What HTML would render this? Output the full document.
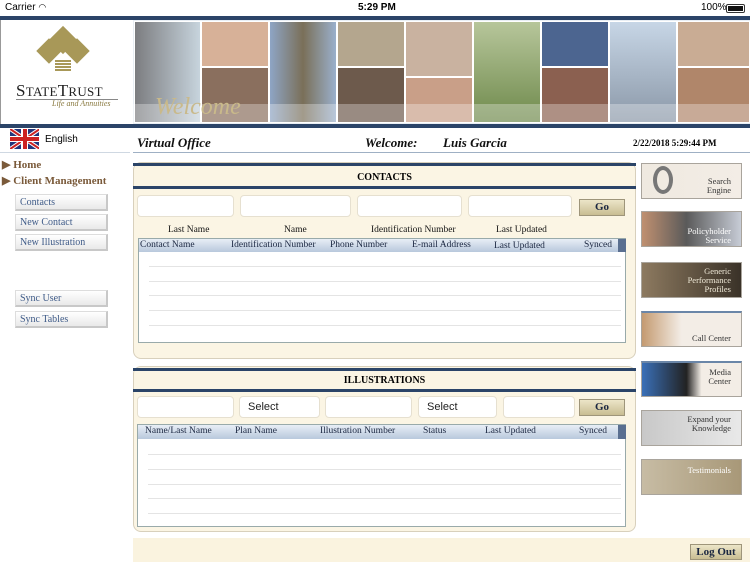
<!DOCTYPE html>
<html><head><style>
*{margin:0;padding:0;box-sizing:border-box}
body{width:750px;height:562px;position:relative;background:#fff;font-family:"Liberation Serif",serif;overflow:hidden}
.a{position:absolute}
.sans{font-family:"Liberation Sans",sans-serif}
.navy{background:#2b4468}
.ph{position:absolute;border:1px solid #fff}
.panel{position:absolute;background:#fbf5e4;border:1px solid #d8d0bc;border-radius:8px}
.inp{position:absolute;background:#fff;border:1px solid #e6e0d0;border-radius:4px;height:22px;font:11px "Liberation Sans",sans-serif;padding:4px 0 0 8px;color:#222}
.go{position:absolute;background:linear-gradient(#ece5c8,#c8bd92);border:1px solid #9e957a;font:bold 11px "Liberation Serif",serif;text-align:center;line-height:15px;color:#1a2640}
.hdr{position:absolute;height:13px;background:linear-gradient(#e8eef6,#b8c8dc);font-size:9.5px;color:#1a2640;border-right:8px solid #5a6f90}
.hdr span{position:absolute;top:1px}
.grid{position:absolute;background:#fff;border:1px solid #9aa}
.gl{position:absolute;left:10px;right:4px;height:1px;background:#e4e4e4}
.col{position:absolute;font-size:9.5px;color:#111}
.nav{position:absolute;left:15px;width:93px;height:17px;background:linear-gradient(#fff,#e9e9e9);border:1px solid #ddd;border-right:2px solid #c8c8c8;border-bottom:2px solid #c8c8c8;font-size:10px;color:#3f5b88;padding:2px 0 0 4px}
.tile{position:absolute;left:641px;width:101px;height:36px;border:1px solid #a9a49c;font-size:8.5px;color:#333;text-align:right;padding-right:10px;line-height:9px}
</style></head><body>
<!-- status -->
<div class="a sans" style="left:5px;top:2px;font-size:10px">Carrier ︎<span style="font-size:9px">◠</span></div>
<div class="a sans" style="left:358px;top:2px;font-size:10px;font-weight:bold">5:29 PM</div>
<div class="a sans" style="left:701px;top:2px;font-size:10px">100%</div>
<div class="a" style="left:726px;top:4px;width:19px;height:9px;border:1px solid #333;border-radius:2px;padding:1px"><div style="background:#111;width:100%;height:100%"></div></div>
<div class="a navy" style="left:0;top:16px;width:750px;height:4px"></div>
<!-- logo -->
<div class="a" style="left:0;top:20px;width:133px;height:105px;border-left:1px solid #999"></div>
<div class="a" style="left:53px;top:30px;width:20px;height:20px;background:#a89858;transform:rotate(45deg)"></div>
<div class="a" style="left:40px;top:42px;width:18px;height:18px;background:#a89858;transform:rotate(45deg)"></div>
<div class="a" style="left:68px;top:42px;width:18px;height:18px;background:#a89858;transform:rotate(45deg)"></div>
<div class="a" style="left:55px;top:60px;width:16px;height:12px;background:repeating-linear-gradient(#a89858 0 2px,#fff 2px 3px)"></div>
<div class="a" style="left:16px;top:81px;font-size:17px;color:#222;letter-spacing:.3px">S<span style="font-size:13px">TATE</span>T<span style="font-size:13px">RUST</span></div>
<div class="a" style="left:16px;top:99px;width:102px;border-top:1px solid #888"></div>
<div class="a" style="left:52px;top:99px;font-size:8px;font-style:italic;color:#8a7a40">Life and Annuities</div>
<!-- photos -->
<div class="a" style="left:133px;top:20px;width:617px;height:105px;background:#e8eef4"></div>
<div class="ph" style="left:134px;top:21px;width:67px;height:102px;background:linear-gradient(90deg,#7c7d80,#c7d4dd)"></div>
<div class="ph" style="left:201px;top:21px;width:68px;height:46px;background:#d7b198"></div>
<div class="ph" style="left:201px;top:67px;width:68px;height:56px;background:#8a6f5e"></div>
<div class="ph" style="left:269px;top:21px;width:68px;height:102px;background:linear-gradient(90deg,#8ea5c5,#7a6f58,#9ab0cc)"></div>
<div class="ph" style="left:337px;top:21px;width:68px;height:46px;background:#b4a68e"></div>
<div class="ph" style="left:337px;top:67px;width:68px;height:56px;background:#6d5a4c"></div>
<div class="ph" style="left:405px;top:21px;width:68px;height:56px;background:#c9b2a0"></div>
<div class="ph" style="left:405px;top:77px;width:68px;height:46px;background:#c99f88"></div>
<div class="ph" style="left:473px;top:21px;width:68px;height:102px;background:linear-gradient(#b7c69b,#6f8a4c)"></div>
<div class="ph" style="left:541px;top:21px;width:68px;height:46px;background:#4c6590"></div>
<div class="ph" style="left:541px;top:67px;width:68px;height:56px;background:#8b6050"></div>
<div class="ph" style="left:609px;top:21px;width:68px;height:102px;background:linear-gradient(#c7d6e6,#8b98a8)"></div>
<div class="ph" style="left:677px;top:21px;width:73px;height:46px;background:#c9ac94"></div>
<div class="ph" style="left:677px;top:67px;width:73px;height:56px;background:#b0866a"></div>
<div class="a" style="left:133px;top:104px;width:617px;height:19px;background:rgba(255,255,255,.3)"></div>
<div class="a" style="left:155px;top:94px;font-size:24px;font-style:italic;color:#c9b98a">Welcome</div>
<div class="a navy" style="left:0;top:124px;width:750px;height:4px"></div>
<!-- flag row -->
<div class="a" style="left:10px;top:129px;width:29px;height:20px;background:#22357a;overflow:hidden">
<div class="a" style="left:-5px;top:8px;width:40px;height:4px;background:#fff;transform:rotate(34deg)"></div>
<div class="a" style="left:-5px;top:8px;width:40px;height:4px;background:#fff;transform:rotate(-34deg)"></div>
<div class="a" style="left:-5px;top:9px;width:40px;height:2px;background:#c22;transform:rotate(34deg)"></div>
<div class="a" style="left:-5px;top:9px;width:40px;height:2px;background:#c22;transform:rotate(-34deg)"></div>
<div class="a" style="left:11px;top:0;width:7px;height:20px;background:#fff"></div>
<div class="a" style="left:0;top:7px;width:29px;height:6px;background:#fff"></div>
<div class="a" style="left:12.5px;top:0;width:4px;height:20px;background:#c22"></div>
<div class="a" style="left:0;top:8px;width:29px;height:4px;background:#c22"></div>
</div>
<div class="a sans" style="left:45px;top:134px;font-size:10px">English</div>
<div class="a" style="left:0;top:152px;width:130px;height:1px;background:#cfd8e2"></div>
<div class="a" style="left:137px;top:135px;font-size:13px;font-weight:bold;font-style:italic;color:#111">Virtual Office</div>
<div class="a" style="left:365px;top:135px;font-size:13px;font-weight:bold;font-style:italic;color:#111">Welcome:</div>
<div class="a" style="left:443px;top:135px;font-size:13px;font-weight:bold;font-style:italic;color:#111">Luis Garcia</div>
<div class="a" style="left:633px;top:138px;font-size:9px;font-weight:bold">2/22/2018 5:29:44 PM</div>
<div class="a" style="left:133px;top:152px;width:617px;height:1px;background:#9fb0c4"></div>
<!-- left nav -->
<div class="a" style="left:2px;top:158px;font-size:11px;font-weight:bold;color:#7a5a3a">▶ Home</div>
<div class="a" style="left:2px;top:174px;font-size:11px;font-weight:bold;color:#7a5a3a">▶ Client Management</div>
<div class="nav" style="top:194px">Contacts</div>
<div class="nav" style="top:214px">New Contact</div>
<div class="nav" style="top:234px">New Illustration</div>
<div class="nav" style="top:290px">Sync User</div>
<div class="nav" style="top:311px">Sync Tables</div>
<!-- contacts -->
<div class="panel" style="left:133px;top:162px;width:503px;height:197px"></div>
<div class="a navy" style="left:133px;top:163px;width:503px;height:3px"></div>
<div class="a navy" style="left:133px;top:186px;width:503px;height:3px"></div>
<div class="a" style="left:133px;top:172px;width:503px;text-align:center;font-size:10px;font-weight:bold">CONTACTS</div>
<div class="inp" style="left:137px;top:195px;width:97px"></div>
<div class="inp" style="left:240px;top:195px;width:111px"></div>
<div class="inp" style="left:357px;top:195px;width:105px"></div>
<div class="inp" style="left:468px;top:195px;width:104px"></div>
<div class="go" style="left:579px;top:199px;width:46px;height:17px">Go</div>
<div class="col" style="left:168px;top:225px">Last Name</div>
<div class="col" style="left:284px;top:225px">Name</div>
<div class="col" style="left:371px;top:225px">Identification Number</div>
<div class="col" style="left:496px;top:225px">Last Updated</div>
<div class="grid" style="left:138px;top:238px;width:488px;height:105px">
<div class="hdr" style="left:0;top:0;width:487px"><span style="left:1px">Contact Name</span><span style="left:92px">Identification Number</span><span style="left:191px">Phone Number</span><span style="left:273px">E-mail Address</span><span style="left:355px;top:2px">Last Updated</span><span style="left:445px">Synced</span></div>
<div class="gl" style="top:27px"></div><div class="gl" style="top:42px"></div><div class="gl" style="top:56px"></div><div class="gl" style="top:71px"></div><div class="gl" style="top:86px"></div>
</div>
<!-- illustrations -->
<div class="panel" style="left:133px;top:366px;width:503px;height:166px"></div>
<div class="a navy" style="left:133px;top:368px;width:503px;height:3px"></div>
<div class="a navy" style="left:133px;top:389px;width:503px;height:3px"></div>
<div class="a" style="left:133px;top:375px;width:503px;text-align:center;font-size:10px;font-weight:bold">ILLUSTRATIONS</div>
<div class="inp" style="left:137px;top:396px;width:97px"></div>
<div class="inp" style="left:239px;top:396px;width:81px">Select</div>
<div class="inp" style="left:325px;top:396px;width:87px"></div>
<div class="inp" style="left:418px;top:396px;width:79px">Select</div>
<div class="inp" style="left:503px;top:396px;width:72px"></div>
<div class="go" style="left:579px;top:399px;width:46px;height:17px">Go</div>
<div class="grid" style="left:137px;top:424px;width:489px;height:103px">
<div class="hdr" style="left:0;top:0;width:488px;height:14px"><span style="left:7px">Name/Last Name</span><span style="left:97px">Plan Name</span><span style="left:182px">Illustration Number</span><span style="left:285px">Status</span><span style="left:347px">Last Updated</span><span style="left:441px">Synced</span></div>
<div class="gl" style="top:29px"></div><div class="gl" style="top:44px"></div><div class="gl" style="top:59px"></div><div class="gl" style="top:73px"></div><div class="gl" style="top:88px"></div>
</div>
<!-- tiles -->
<div class="tile" style="top:163px;background:linear-gradient(90deg,#efe9e0,#f3ede6);padding-top:13px">Search<br>Engine</div>
<div class="a" style="left:653px;top:166px;width:20px;height:28px;border:4px solid #777;border-radius:50%"></div>
<div class="tile" style="top:211px;background:linear-gradient(90deg,#c09070,#5a5a5a 45%,#c7ccd6);padding-top:15px;color:#fff">Policyholder<br>Service</div>
<div class="tile" style="top:262px;background:linear-gradient(90deg,#8d7a60,#3a3228);padding-top:4px;color:#f0ead8">Generic<br>Performance<br>Profiles</div>
<div class="tile" style="top:311px;background:linear-gradient(90deg,#c49a70,#f3ede6 40%);padding-top:21px;border-top:2px solid #6a86a8">Call Center</div>
<div class="tile" style="top:361px;background:linear-gradient(90deg,#3a70b8,#222 45%,#f3ede6 60%);padding-top:5px;border-top:2px solid #6a86a8">Media<br>Center</div>
<div class="tile" style="top:410px;background:linear-gradient(90deg,#c8c8c8,#e9e9e9);padding-top:4px">Expand your<br>Knowledge</div>
<div class="tile" style="top:459px;background:linear-gradient(90deg,#c7bca4,#a89878);padding-top:6px;color:#fff">Testimonials</div>
<!-- bottom -->
<div class="a" style="left:133px;top:538px;width:617px;height:24px;background:#faf3df"></div>
<div class="go" style="left:690px;top:544px;width:52px;height:16px">Log Out</div>
</body></html>
